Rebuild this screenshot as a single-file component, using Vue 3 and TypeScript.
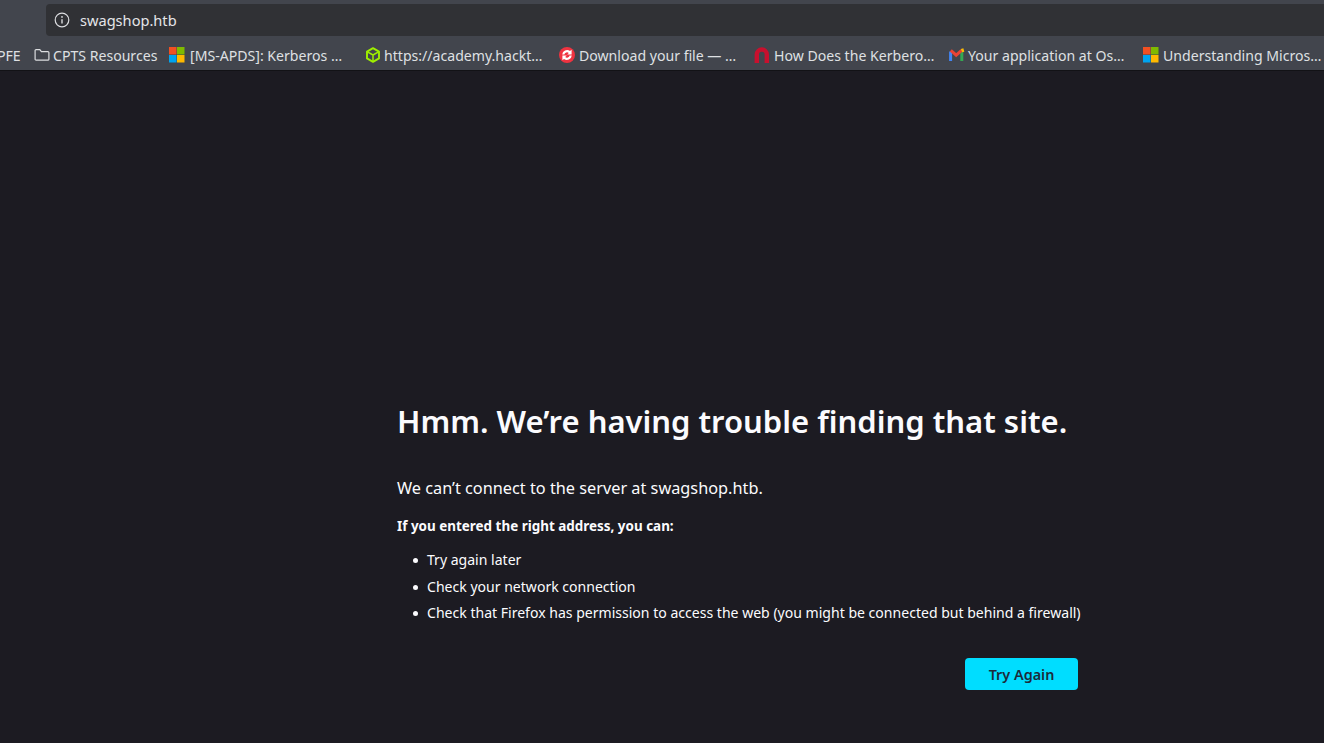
<script setup lang="ts">
const items: string[] = ['Try again later', 'Check your network connection', 'Check that Firefox has permission to access the web (you might be connected but behind a firewall)']
</script>

<template>
  <div class="page">
    <div class="urlrow">
      <div class="urlbar">
        <svg class="info" width="16" height="16" viewBox="0 0 16 16" fill="none" stroke="#dcdde0" stroke-width="1.2">
          <circle cx="8" cy="8" r="6.8" />
          <path d="M8 7.2V11.6" stroke-width="1.4" />
          <circle cx="8" cy="4.9" r="0.9" fill="#dcdde0" stroke="none" />
        </svg>
        <span class="url">swagshop.htb</span>
      </div>
    </div>
    <div class="bookmarks">
      <span class="bm pfe">PFE</span>
      <span class="bm w-cpts">
        <svg class="ico" width="16" height="16" viewBox="0 0 16 16" fill="none" stroke="#dcdde0" stroke-width="1.2">
          <path d="M1.1 12.2V3.6a1 1 0 0 1 1-1h3.7l1.6 2h6.5a1 1 0 0 1 1 1v6.6a1 1 0 0 1-1 1H2.1a1 1 0 0 1-1-1z" />
        </svg>
        <span class="lbl">CPTS Resources</span>
      </span>
      <span class="bm w-ms">
        <svg class="ico gap5" width="16" height="16" viewBox="0 0 16 16">
          <rect x="0" y="0" width="7.5" height="7.5" fill="#f25022" />
          <rect x="8" y="0" width="7.5" height="7.5" fill="#7fba00" />
          <rect x="0" y="8" width="7.5" height="7.5" fill="#00a4ef" />
          <rect x="8" y="8" width="7.5" height="7.5" fill="#ffb900" />
        </svg>
        <span class="lbl">[MS-APDS]: Kerberos …</span>
      </span>
      <span class="bm w-htb">
        <svg class="ico" width="16" height="16" viewBox="0 0 16 16" fill="none" stroke="#9fef00" stroke-width="1.9" stroke-linejoin="round">
          <path d="M8 1.2 14 4.6V11.4L8 14.8 2 11.4V4.6Z" />
          <path d="M2 4.6 8 8l6-3.4M8 8v6.8" stroke-width="1.5" />
        </svg>
        <span class="lbl">https://academy.hackt…</span>
      </span>
      <span class="bm w-dl">
        <svg class="ico gap4" width="16" height="16" viewBox="0 0 16 16">
          <circle cx="8" cy="8" r="8" fill="#ef3340" />
          <path d="M3.2 7.6A4.9 4.9 0 0 1 11 4.1L12.6 2.8V7.4H8.2L9.8 6A2.7 2.7 0 0 0 5.4 7.6Z" fill="#fff" />
          <path d="M12.8 8.4A4.9 4.9 0 0 1 5 11.9L3.4 13.2V8.6H7.8L6.2 10A2.7 2.7 0 0 0 10.6 8.4Z" fill="#fff" />
        </svg>
        <span class="lbl">Download your file — …</span>
      </span>
      <span class="bm w-how">
        <svg class="ico gap4" width="16" height="16" viewBox="0 0 16 16" fill="none">
          <path d="M2.8 16V7.5a5 5 0 0 1 10 0V16" stroke="#c8102e" stroke-width="4.4" />
        </svg>
        <span class="lbl">How Does the Kerbero…</span>
      </span>
      <span class="bm w-gm">
        <svg class="ico" width="16" height="16" viewBox="0 0 16 16" fill="none">
          <path d="M1.6 14V4.5" stroke="#4285f4" stroke-width="3" />
          <path d="M12.8 14V4.5" stroke="#34a853" stroke-width="3" />
          <path d="M1.8 3.4 7.2 8.2l5.4-4.8" stroke="#ea4335" stroke-width="3" />
          <path d="M12.2 3 13.6 2.6 14.3 5" stroke="#fbbc04" stroke-width="2.2" />
        </svg>
        <span class="lbl">Your application at Os…</span>
      </span>
      <span class="bm w-un">
        <svg class="ico gap4" width="16" height="16" viewBox="0 0 16 16">
          <rect x="0" y="0" width="7.5" height="7.5" fill="#f25022" />
          <rect x="8" y="0" width="7.5" height="7.5" fill="#7fba00" />
          <rect x="0" y="8" width="7.5" height="7.5" fill="#00a4ef" />
          <rect x="8" y="8" width="7.5" height="7.5" fill="#ffb900" />
        </svg>
        <span class="lbl">Understanding Micros…</span>
      </span>
    </div>
    <main class="content">
      <div class="box">
        <h1>Hmm. We’re having trouble finding that site.</h1>
        <p class="lead">We can’t connect to the server at swagshop.htb.</p>
        <p class="strong">If you entered the right address, you can:</p>
        <ul>
          <li v-for="item in items" :key="item">{{ item }}</li>
        </ul>
        <div class="actions">
          <button type="button">Try Again</button>
        </div>
      </div>
    </main>
  </div>
</template>

<style>
html, body { margin: 0; background: #1c1b22; overflow: hidden; }
</style>

<style scoped>
.page {
  width: 1324px;
  height: 743px;
  display: flex;
  flex-direction: column;
  background: #1c1b22;
  font-family: "Noto Sans", "Open Sans", sans-serif;
  color: #fbfbfe;
  overflow: hidden;
}
.urlrow {
  height: 36px;
  box-sizing: border-box;
  padding: 4px 0 0 46px;
  background: #42454d;
  flex: none;
}
.urlbar {
  height: 32px;
  display: flex;
  align-items: center;
  padding-left: 8px;
  background: #303135;
  border-radius: 4px 0 0 4px;
  color: #e4e5e8;
}
.info { flex: none; }
.url { margin-left: 10px; font-size: 14.6px; }
.bookmarks {
  height: 35px;
  box-sizing: border-box;
  padding-top: 4px;
  display: flex;
  align-items: center;
  background: #42454d;
  border-bottom: 1px solid #121216;
  flex: none;
  white-space: nowrap;
  overflow: hidden;
  color: #dfe0e3;
  font-size: 14.1px;
}
.bm { display: flex; align-items: center; flex: none; }
.pfe { margin-left: -3px; width: 37px; }
.ico { flex: none; margin-right: 3px; }
.ico.gap4 { margin-right: 4px; }
.ico.gap5 { margin-right: 5px; }
.w-cpts { width: 135px; }
.w-ms { width: 196px; }
.w-htb { width: 194px; }
.w-dl { width: 195px; }
.w-how { width: 195px; }
.w-gm { width: 194px; }
.w-un { width: 181px; }
.content {
  flex: 1;
  padding: 331px 0 0 397px;
}
.box { width: 685px; }
h1 {
  margin: 0;
  font-size: 31px;
  line-height: 38px;
  font-weight: 600;
  white-space: nowrap;
  color: #fbfbfe;
}
.lead {
  margin: 36px 0 0;
  font-size: 16.3px;
  line-height: 24px;
}
.strong {
  margin: 16px 0 0;
  font-size: 13.45px;
  line-height: 20px;
  font-weight: 700;
}
ul {
  margin: 14px 0 0;
  padding: 0 0 0 30px;
  font-size: 14.05px;
  line-height: 20px;
  white-space: nowrap;
  list-style: none;
}
li {
  position: relative;
  margin-bottom: 6.5px;
}
li::before {
  content: "";
  position: absolute;
  left: -14px;
  top: 8px;
  width: 5px;
  height: 5px;
  border-radius: 50%;
  background: #fbfbfe;
}
.actions {
  display: flex;
  justify-content: flex-end;
  padding: 28px 4px 0 0;
}
button {
  width: 113px;
  height: 32px;
  padding: 1px 0 0;
  border: 0;
  border-radius: 4px;
  background: #00ddff;
  color: #1c2b3a;
  font: 600 14.4px "Noto Sans", sans-serif;
}
</style>
